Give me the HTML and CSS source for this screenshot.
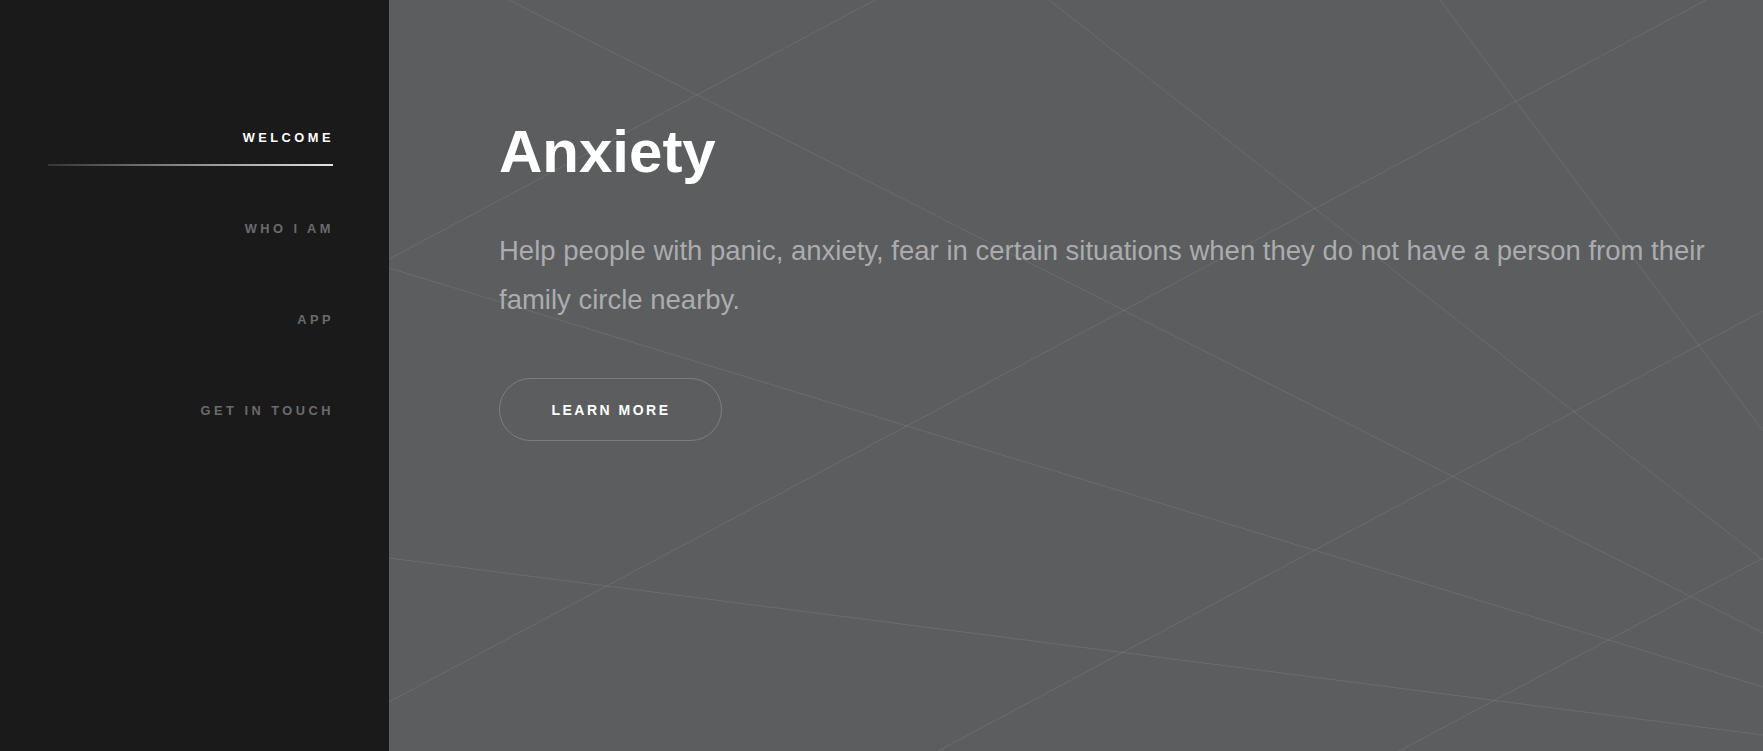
FILE: index.html
```html
<!DOCTYPE html>
<html lang="en">
<head>
<meta charset="utf-8">
<title>Anxiety</title>
<link rel="stylesheet" href="styles.css">
</head>
<body>
<div class="page">
  <aside class="sidebar">
    <nav class="nav">
      <a class="nav-item active" href="#welcome"><span class="nav-text">WELCOME</span><span class="nav-line"></span></a>
      <a class="nav-item" href="#who"><span class="nav-text">WHO I AM</span></a>
      <a class="nav-item" href="#app"><span class="nav-text">APP</span></a>
      <a class="nav-item" href="#contact"><span class="nav-text">GET IN TOUCH</span></a>
    </nav>
  </aside>
  <main class="main">
    <svg class="bg-lines" viewBox="0 0 1374 751" preserveAspectRatio="none" aria-hidden="true">
      <line x1="120" y1="0" x2="1374" y2="633"/>
      <line x1="0" y1="259" x2="486" y2="0"/>
      <line x1="0" y1="268" x2="1374" y2="687"/>
      <line x1="0" y1="702" x2="1317" y2="0"/>
      <line x1="0" y1="558" x2="1374" y2="735"/>
      <line x1="549" y1="751" x2="1374" y2="311"/>
      <line x1="1010" y1="751" x2="1374" y2="558"/>
      <line x1="660" y1="0" x2="1374" y2="560"/>
      <line x1="1051" y1="0" x2="1374" y2="431"/>
    </svg>
    <section class="hero">
      <h1 class="hero-title">Anxiety</h1>
      <p class="hero-text">Help people with panic, anxiety, fear in certain situations when they do not have a person from their family circle nearby.</p>
      <a class="btn" href="#who">LEARN MORE</a>
    </section>
  </main>
</div>
</body>
</html>
```
FILE: styles.css
```css
* {
  box-sizing: border-box;
}

html, body {
  margin: 0;
  padding: 0;
  height: 100%;
}

body {
  font-family: "Liberation Sans", Arial, Helvetica, sans-serif;
  background: #5c5d5f;
  overflow: hidden;
}

.page {
  display: flex;
  height: 100vh;
}

.sidebar {
  flex: 0 0 389px;
  background: #1a1a1a;
  padding: 128px 55px 0 0;
}

.nav {
  display: flex;
  flex-direction: column;
}

.nav-item {
  height: 91px;
  display: flex;
  flex-direction: column;
  align-items: flex-end;
  text-decoration: none;
  color: #6b6b6d;
  font-size: 12.8px;
  font-weight: 700;
  line-height: 20px;
  letter-spacing: 3.5px;
}

.nav-item.active {
  color: #ffffff;
}

.nav-line {
  display: block;
  width: 285px;
  height: 2px;
  margin-top: 15.5px;
  margin-right: 1px;
  background: linear-gradient(to right, rgba(255, 255, 255, 0.12), rgba(255, 255, 255, 0.88));
}

.main {
  position: relative;
  flex: 1 1 auto;
  background: #5c5d5f;
  overflow: hidden;
}

.bg-lines {
  position: absolute;
  inset: 0;
  width: 100%;
  height: 100%;
  z-index: 0;
}

.bg-lines line {
  stroke: rgba(255, 255, 255, 0.09);
  stroke-width: 1;
}

.hero {
  position: relative;
  z-index: 1;
  padding: 116px 0 0 110px;
}

.hero-title {
  margin: 0;
  font-size: 60px;
  line-height: 72px;
  font-weight: 700;
  color: #ffffff;
}

.hero-text {
  margin: 38px 0 0;
  max-width: 1240px;
  font-size: 27.5px;
  line-height: 49px;
  color: #abacae;
}

.btn {
  display: inline-flex;
  align-items: center;
  justify-content: center;
  margin-top: 54px;
  width: 223px;
  height: 63px;
  border: 1px solid rgba(255, 255, 255, 0.2);
  border-radius: 32px;
  color: #ffffff;
  text-decoration: none;
  font-size: 14px;
  font-weight: 700;
  letter-spacing: 2.5px;
  padding-left: 1px;
}
```
